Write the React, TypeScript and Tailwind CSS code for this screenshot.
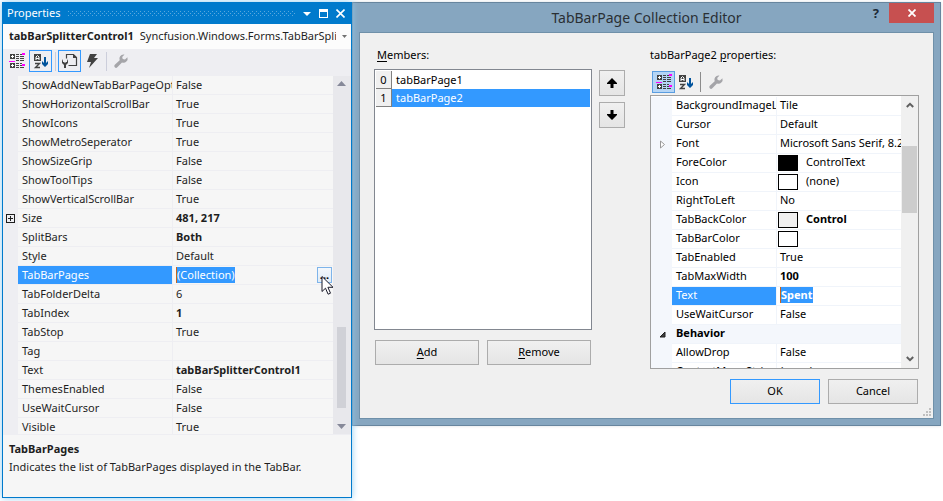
import React from "react";

type Row = {
  name: string;
  value?: string;
  bold?: boolean;
  swatch?: string;
  mark?: "plus" | "closed" | "open";
  selected?: boolean;
  category?: boolean;
};

const controlRows: Row[] = [
  { name: "ShowAddNewTabBarPageOption", value: "False" },
  { name: "ShowHorizontalScrollBar", value: "True" },
  { name: "ShowIcons", value: "True" },
  { name: "ShowMetroSeperator", value: "True" },
  { name: "ShowSizeGrip", value: "False" },
  { name: "ShowToolTips", value: "False" },
  { name: "ShowVerticalScrollBar", value: "True" },
  { name: "Size", value: "481, 217", bold: true, mark: "plus" },
  { name: "SplitBars", value: "Both", bold: true },
  { name: "Style", value: "Default" },
  { name: "TabBarPages", value: "(Collection)", selected: true },
  { name: "TabFolderDelta", value: "6" },
  { name: "TabIndex", value: "1", bold: true },
  { name: "TabStop", value: "True" },
  { name: "Tag", value: "" },
  { name: "Text", value: "tabBarSplitterControl1", bold: true },
  { name: "ThemesEnabled", value: "False" },
  { name: "UseWaitCursor", value: "False" },
  { name: "Visible", value: "True" },
];

const pageRows: Row[] = [
  { name: "BackgroundImageLayout", value: "Tile" },
  { name: "Cursor", value: "Default" },
  { name: "Font", value: "Microsoft Sans Serif, 8.25pt", mark: "closed" },
  { name: "ForeColor", value: "ControlText", swatch: "bg-black" },
  { name: "Icon", value: "(none)", swatch: "bg-white" },
  { name: "RightToLeft", value: "No" },
  { name: "TabBackColor", value: "Control", bold: true, swatch: "bg-[#f0f0f0]" },
  { name: "TabBarColor", value: "", swatch: "bg-white" },
  { name: "TabEnabled", value: "True" },
  { name: "TabMaxWidth", value: "100", bold: true },
  { name: "Text", value: "Spent", bold: true, selected: true },
  { name: "UseWaitCursor", value: "False" },
  { name: "Behavior", category: true, mark: "open" },
  { name: "AllowDrop", value: "False" },
  { name: "ContextMenuStrip", value: "(none)" },
];

function CategorizedIcon() {
  return (
    <svg width="16" height="16" viewBox="0 0 16 16" shapeRendering="crispEdges" aria-hidden="true">
      <path fill="#424242" d="M1 1h5v5H1zM1 10h5v5H1zM7 1h3v1H7zM7 3h3v1H7zM7 5h3v1H7zM11 1h2v1h-2zM11 3h4v1h-4zM11 5h4v1h-4zM7 7h3v1H7zM11 7h4v1h-4zM7 10h3v1H7zM7 12h3v1H7zM7 14h3v1H7zM11 10h2v1h-2zM11 12h2v1h-2zM11 14h4v1h-4z" />
      <path fill="#fff" d="M3 2h1v3H3zM2 3h3v1H2zM3 11h1v3H3zM2 12h3v1H2z" />
      <path fill="#ff00ff" d="M0 8h6v1H0zM13 0h3v2h-3zM13 11h3v2h-3z" />
    </svg>
  );
}

function SortIcon() {
  return (
    <svg width="16" height="16" viewBox="0 0 16 16" aria-hidden="true">
      <rect x="1" y="1" width="7" height="7" fill="#424242" />
      <path d="M3 7V4l1.500-1.500L6 4v3M3 5.500h3" fill="none" stroke="#fff" />
      <path d="M2 10.500h4.500L2.500 14.500H7" fill="none" stroke="#424242" strokeWidth="1.400" />
      <path d="M11 4h2v6l2-2v3l-3 3-3-3V8l2 2z" fill="#00539c" />
    </svg>
  );
}

function PageIcon() {
  return (
    <svg width="16" height="16" viewBox="0 0 16 16" aria-hidden="true">
      <path d="M4.500 5.500v-4h7l3 3v8h-8" fill="none" stroke="#424242" strokeWidth="1.200" />
      <path d="M11 1v4h4z" fill="#424242" />
      <path d="M1 6L0 8v2l2 2v3h2v-3l2-2V8L5 6v3H4L3 10 2 9H1z" fill="#424242" />
    </svg>
  );
}

function BoltIcon() {
  return (
    <svg width="12" height="16" viewBox="0 0 12 16" aria-hidden="true">
      <path d="M4 1h7L8 5h4L3 15l2-6H1z" fill="#424242" />
    </svg>
  );
}

function WrenchIcon() {
  return (
    <svg width="16" height="16" viewBox="0 0 16 16" aria-hidden="true">
      <path
        d="M10.500 1.500a4.200 4.200 0 0 0-3.800 5.700L1.800 11.800a1.700 1.700 0 0 0 2.500 2.500L9 9.500a4.200 4.200 0 0 0 5.400-5.300L12 6.600l-2.300-.5-.5-2.200 2.300-2.300z"
        fill="#a5a5a9"
      />
    </svg>
  );
}

function Pointer() {
  return (
    <svg className="pointer-events-none absolute left-1 top-2 z-10" width="13" height="21" viewBox="0 0 13 21" aria-hidden="true">
      <path d="M1 1.500v15l3.500-3.300 2.600 6 2.400-1-2.600-5.900H12z" fill="#fff" stroke="#1a1a2a" />
    </svg>
  );
}

function Mark({ kind }: { kind?: Row["mark"] }) {
  if (kind === "plus")
    return (
      <svg className="ml-[3px] block" width="9" height="9" viewBox="0 0 9 9" shapeRendering="crispEdges" aria-hidden="true">
        <path d="M.5.5h8v8h-8zM2 4.500h5M4.500 2v5" fill="none" stroke="#1e1e1e" />
      </svg>
    );
  if (kind === "closed")
    return (
      <svg className="ml-[9px] block" width="6" height="9" viewBox="0 0 6 9" aria-hidden="true">
        <path d="M.5 1v7l4-3.500z" fill="#fff" stroke="#999" />
      </svg>
    );
  if (kind === "open")
    return (
      <svg className="ml-[8px] block" width="7" height="7" viewBox="0 0 7 7" aria-hidden="true">
        <path d="M6 1v5H1z" fill="#404040" stroke="#202020" />
      </svg>
    );
  return null;
}

function PropertyTable({ rows, dark, label }: { rows: Row[]; dark?: boolean; label: string }) {
  const line = dark ? "border-[#eeeef2]" : "border-[#f0f4fa]";
  const gutter = dark ? "bg-[#eeeef2]" : "bg-[#f4f7fc]";
  const cell =
    "overflow-hidden whitespace-nowrap border-b p-0 text-left align-top " +
    (dark ? "leading-[18px] " : "leading-4 ") +
    line;
  return (
    <table aria-label={label} className="w-full min-w-0 flex-1 table-fixed border-separate border-spacing-0 self-start">
      <colgroup>
        <col className={dark ? "w-[15px]" : "w-[21px]"} />
        <col className={dark ? "w-[155px]" : "w-[105px]"} />
        <col />
      </colgroup>
      <tbody>
        {rows.map((r) =>
          r.category ? (
            <tr key={r.name} className={gutter}>
              <td className="h-[19px] p-0">
                <Mark kind={r.mark} />
              </td>
              <th colSpan={2} className={cell + " h-[19px] pl-1 font-bold"}>
                {r.name}
              </th>
            </tr>
          ) : (
            <tr key={r.name}>
              <td className={"h-[19px] p-0 " + gutter}>
                <Mark kind={r.mark} />
              </td>
              <th
                scope="row"
                className={
                  cell +
                  " border-r pl-1 font-normal " +
                  (r.selected ? "bg-[#3399ff] bg-clip-padding text-white" : "")
                }
              >
                {r.name}
              </th>
              <td className={cell + (r.swatch ? " pl-px" : " pl-[3px]") + (r.bold ? " font-bold" : "") + (r.selected ? " overflow-visible" : "")}>
                <div className={"flex h-[18px] " + (dark ? "items-center" : "items-start")}>
                  {r.swatch && <span className={"mr-2 mt-px h-4 w-5 shrink-0 border border-black " + r.swatch} />}
                  {r.selected ? (
                    <input
                      aria-label={r.name}
                      defaultValue={r.value}
                      className="field-sizing-content h-4 border-l border-[#c8641e] bg-[#3399ff] leading-4 text-white outline-none"
                    />
                  ) : (
                    <span>{r.value}</span>
                  )}
                  {r.selected && dark && (
                    <span className="relative ml-auto mr-px flex">
                      <button
                        type="button"
                        aria-label="Edit collection"
                        className="h-4 w-[15px] border border-[#7eb4ea] bg-gradient-to-b from-[#f4f8fc] to-[#e0ebf6] text-center font-bold leading-[12px] text-black"
                      >
                        ...
                      </button>
                      <Pointer />
                    </span>
                  )}
                </div>
              </td>
            </tr>
          ),
        )}
      </tbody>
    </table>
  );
}

function PropertiesPanel() {
  return (
    <aside className="z-10 flex w-[350px] shrink-0 flex-col border border-[#007acc] bg-[#f6f6f6] text-[#1e1e1e] shadow-[0_0_7px_#8fcbf0]">
      <header className="flex h-[21px] items-center bg-[#007acc] pl-1 pr-1.5 text-white">
        <h2>Properties</h2>
        <svg className="ml-2 mr-2 h-[5px] min-w-0 flex-1" shapeRendering="crispEdges" aria-hidden="true">
          <defs>
            <pattern id="grip" width="4" height="4" patternUnits="userSpaceOnUse">
              <path d="M0 0h1v1H0zM2 2h1v1H2z" fill="#59a8de" />
            </pattern>
          </defs>
          <rect width="100%" height="5" fill="url(#grip)" />
        </svg>
        <div className="flex items-center gap-2">
          <button type="button" aria-label="Window position">
            <svg width="8" height="4" viewBox="0 0 8 4">
              <path d="M0 0h8L4 4z" fill="#fff" />
            </svg>
          </button>
          <button type="button" aria-label="Maximize">
            <svg width="9" height="9" viewBox="0 0 9 9" shapeRendering="crispEdges">
              <path d="M0 0h9v9H0zM1 3v5h7V3z" fill="#fff" fillRule="evenodd" />
            </svg>
          </button>
          <button type="button" aria-label="Close">
            <svg width="9" height="9" viewBox="0 0 9 9">
              <path d="M.5.5l8 8M8.500.5l-8 8" stroke="#fff" strokeWidth="1.600" />
            </svg>
          </button>
        </div>
      </header>
      <label className="relative flex h-[25px] items-center bg-[#fcfcfc] pl-1.5 pr-1">
        <span className="min-w-0 flex-1 overflow-hidden whitespace-nowrap">
          <b className="mr-1.5">tabBarSplitterControl1</b>
          Syncfusion.Windows.Forms.TabBarSplitterControl
        </span>
        <svg className="ml-[6px]" width="5" height="3" viewBox="0 0 5 3" aria-hidden="true">
          <path d="M0 0h5L2.500 3z" fill="#717171" />
        </svg>
        <select aria-label="Selected object" className="absolute inset-0 opacity-0">
          <option>tabBarSplitterControl1</option>
        </select>
      </label>
      <div role="toolbar" className="flex h-[27px] items-start bg-[#eeeef2] pl-1.5 pt-px">
        <button type="button" aria-label="Categorized" className="flex h-[22px] w-[17px] items-center">
          <CategorizedIcon />
        </button>
        <button type="button" aria-label="Alphabetical" className="ml-[3px] flex h-[22px] w-[23px] items-center justify-center border border-[#3399ff]">
          <SortIcon />
        </button>
        <span className="ml-[3px] mr-0.5 mt-0.5 h-[19px] w-px bg-[#cccedb]" />
        <button type="button" aria-label="Properties" className="flex h-[22px] w-[23px] items-center justify-center border border-[#3399ff]">
          <PageIcon />
        </button>
        <button type="button" aria-label="Events" className="ml-[5px] flex h-[22px] items-center">
          <BoltIcon />
        </button>
        <span className="ml-2 mt-0.5 h-[19px] w-px bg-[#cccedb]" />
        <button type="button" aria-label="Property pages" disabled className="ml-[6px] flex h-[22px] items-center">
          <WrenchIcon />
        </button>
      </div>
      <div className="flex h-[359px] overflow-hidden border-b border-[#eeeef2]">
        <PropertyTable rows={controlRows} dark label="Control properties" />
        <div className="flex w-[18px] flex-col items-center bg-[#e8e8ec] py-[5px] pr-0.5">
          <svg width="9" height="5" viewBox="0 0 9 5" aria-hidden="true">
            <path d="M4.500 0L9 5H0z" fill="#868999" />
          </svg>
          <span className="mb-4 mt-auto h-[81px] w-[9px] bg-[#d0d1d7]" />
          <svg width="9" height="5" viewBox="0 0 9 5" aria-hidden="true">
            <path d="M4.500 5L9 0H0z" fill="#868999" />
          </svg>
        </div>
      </div>
      <div className="min-h-[62px] px-1.5 pt-[5px] leading-[18px]">
        <h3 className="font-bold">TabBarPages</h3>
        <p>Indicates the list of TabBarPages displayed in the TabBar.</p>
      </div>
    </aside>
  );
}

const members = ["tabBarPage1", "tabBarPage2"];
const pushButton = "h-[25px] border border-[#acacac] bg-gradient-to-b from-[#f0f0f0] to-[#e5e5e5]";

function ArrowButton({ down }: { down?: boolean }) {
  return (
    <button
      type="button"
      aria-label={down ? "Move down" : "Move up"}
      className="flex size-[26px] items-center justify-center border border-[#acacac] bg-gradient-to-b from-[#f0f0f0] to-[#e5e5e5]"
    >
      <svg width="10" height="10" viewBox="0 0 10 10" aria-hidden="true">
        <path d={down ? "M3.500 0h3v4H10v1L5 10 0 5V4h3.500z" : "M3.500 10h3V6H10V5L5 0 0 5v1h3.500z"} fill="#000" />
      </svg>
    </button>
  );
}

function CollectionEditor() {
  return (
    <section role="dialog" aria-label="TabBarPage Collection Editor" className="flex min-w-0 flex-1 flex-col self-start border border-[#67859e] bg-[#86a6c0] px-1.5 pb-1.5 text-black shadow-[0_0_3px_#d8dde2]">
      <header className="grid h-[29px] grid-cols-[1fr_auto_1fr] items-start">
        <span />
        <h1 className="text-sm leading-[30px] text-[#2a2f34]">TabBarPage Collection Editor</h1>
        <div className="flex justify-end">
          <button type="button" aria-label="Help" className="mr-[10px] h-5 text-[13px] font-bold leading-5 text-[#1c2a36]">
            ?
          </button>
          <button type="button" aria-label="Close" className="flex h-5 w-[45px] items-center justify-center bg-[#c75050]">
            <svg width="8" height="8" viewBox="0 0 8 8">
              <path d="M.5.5l7 7M7.500.5l-7 7" stroke="#fff" strokeWidth="1.800" />
            </svg>
          </button>
        </div>
      </header>
      <div className="relative flex border border-[#6f90a9] bg-[#f0f0f0] px-[14px] pb-[14px] pt-[14px]">
        <div className="w-[218px] shrink-0">
          <div id="members" className="pl-[3px] leading-4">
            <u className="underline-offset-2">M</u>embers:
          </div>
          <ul role="listbox" aria-labelledby="members" className="mt-1.5 h-[261px] border border-[#828790] bg-white p-px">
            {members.map((m, i) => (
              <li key={m} role="option" aria-selected={i === 1} className="flex h-[18px] leading-[18px]">
                <span className="w-4 border-b border-r border-[#808080] bg-[#f0f0f0] text-center leading-[17px]">{i}</span>
                <span className={"flex-1 pl-1 " + (i === 1 ? "bg-[#3399ff] text-white" : "")}>{m}</span>
              </li>
            ))}
          </ul>
          <div className="mt-[10px] grid grid-cols-2 gap-2 px-px">
            <button type="button" className={pushButton}>
              <u className="underline-offset-2">A</u>dd
            </button>
            <button type="button" className={pushButton}>
              <u className="underline-offset-2">R</u>emove
            </button>
          </div>
        </div>
        <div className="ml-[7px] mt-[23px] flex w-[26px] shrink-0 flex-col gap-1.5">
          <ArrowButton />
          <ArrowButton down />
        </div>
        <div className="ml-[25px] min-w-0 flex-1">
          <div className="leading-4">
            tabBarPage2 <u className="underline-offset-2">p</u>roperties:
          </div>
          <div role="toolbar" className="mt-2 flex h-[22px] items-center pl-0.5">
            <button type="button" aria-label="Categorized" className="flex h-[22px] w-[23px] items-center justify-center border border-[#5a9de0] bg-[#b5d5f5]">
              <CategorizedIcon />
            </button>
            <button type="button" aria-label="Alphabetical" className="ml-[3px]">
              <SortIcon />
            </button>
            <span className="ml-[6px] mr-[7px] h-5 w-px bg-[#8c8c8c]" />
            <button type="button" aria-label="Property pages" disabled>
              <WrenchIcon />
            </button>
          </div>
          <div className="mt-0.5 flex h-[274px] overflow-hidden border border-[#a0a0a0] bg-white">
            <div className="min-w-0 flex-1 pt-px">
              <PropertyTable rows={pageRows} label="Page properties" />
            </div>
            <div className="flex w-[17px] shrink-0 flex-col items-center bg-[#f0f0f0] pb-1.5 pt-1.5">
              <svg width="8" height="6" viewBox="0 0 8 6" aria-hidden="true">
                <path d="M.8 5L4 1.800 7.200 5" fill="none" stroke="#606060" strokeWidth="2" />
              </svg>
              <span className="mt-[38px] h-[67px] w-[15px] bg-[#cdcdcd]" />
              <svg className="mt-auto" width="8" height="6" viewBox="0 0 8 6" aria-hidden="true">
                <path d="M.8 1L4 4.200 7.200 1" fill="none" stroke="#606060" strokeWidth="2" />
              </svg>
            </div>
          </div>
          <div className="mt-[10px] flex justify-end gap-2 pr-px">
            <button type="button" className="h-[25px] w-[90px] border border-[#3399ff] bg-gradient-to-b from-[#f0f0f0] to-[#e5e5e5]">
              OK
            </button>
            <button type="button" className={pushButton + " w-[90px]"}>
              Cancel
            </button>
          </div>
        </div>
        <svg className="absolute bottom-0.5 right-0.5" width="8" height="8" viewBox="0 0 8 8" shapeRendering="crispEdges" aria-hidden="true">
          <path d="M6 0h2v2H6zM3 3h2v2H3zM6 3h2v2H6zM0 6h2v2H0zM3 6h2v2H3zM6 6h2v2H6z" fill="#bfbfbf" />
        </svg>
      </div>
    </section>
  );
}

export default function App() {
  return (
    <main className="flex min-h-screen items-start bg-white p-0.5 font-['Noto_Sans','Open_Sans',sans-serif] text-[11px]">
      <PropertiesPanel />
      <CollectionEditor />
    </main>
  );
}
